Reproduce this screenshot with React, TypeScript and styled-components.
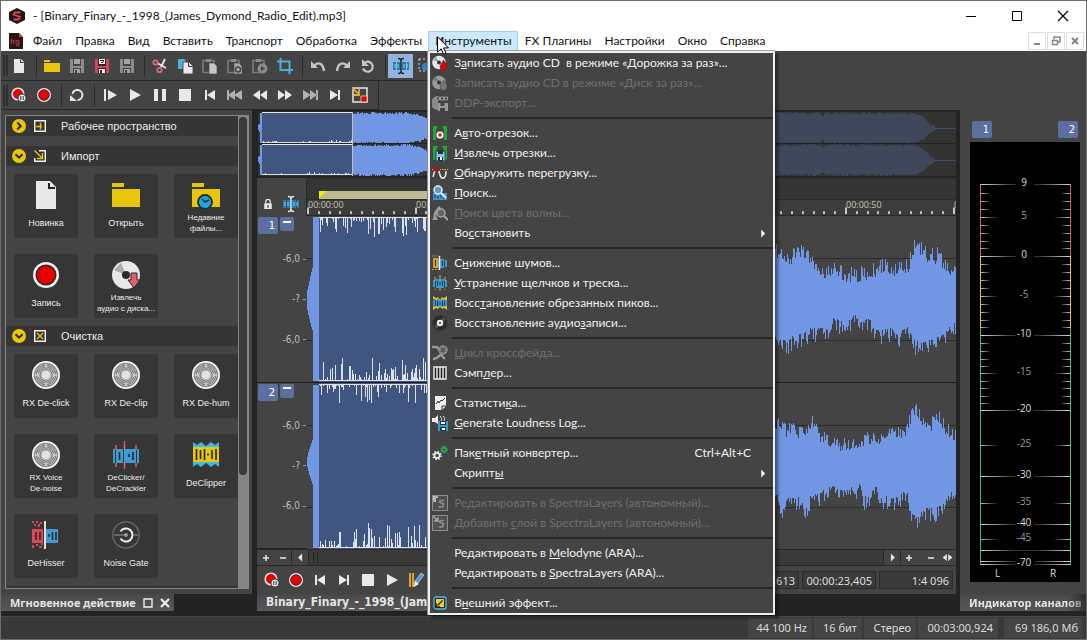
import React from "react";
import styled, { createGlobalStyle, css } from "styled-components";

const UI = '"Noto Sans", "Open Sans", sans-serif';
const MENU = 'Lato, "Open Sans", sans-serif';
const CONDENSED = '"DejaVu Sans Condensed", "DejaVu Sans", sans-serif';
const SMALL = '"Open Sans", "Noto Sans", sans-serif';
const ARIAL = '"Liberation Sans", Arial, sans-serif';

const C = {
  panel: "#444444",
  dark: "#232323",
  row: "#353535",
  tile: "#363636",
  line: "#292929",
  wave: "#7096e4",
  sel: "#405680",
  chip: "#5b6fa0",
  blue: "#3f9bd1",
  yellow: "#e8c60c",
  red: "#e80000",
  light: "#e8e8e8",
  grey: "#8c8c8c",
};

const Global = createGlobalStyle`
  * { box-sizing: border-box; }
  body { margin: 0; background: ${C.dark}; font-family: ${UI}; font-size: 11px; }
  button, input { font: inherit; color: inherit; background: none; border: 0; padding: 0; margin: 0; }
  svg { display: block; flex: none; }
`;

/* ---------- icons ---------- */

type IconProps = { size?: number; box?: number; children: React.ReactNode };
const Icon = ({ size = 16, box = 16, children }: IconProps) => (
  <svg width={size} height={size} viewBox={`0 0 ${box} ${box}`} aria-hidden="true">{children}</svg>
);

const Floppy = ({ body, ink, mark }: { body: string; ink: string; mark?: boolean }) => (
  <Icon>
    <path d="M1 1h14v14H1z" fill={body} />
    <path d="M4 1h8v7H4zM4 10h8v5H4z" fill={ink} />
    <path d="M5 1h6v5H5zM5 11h6v4H5z" fill={mark ? "#f0f0f0" : "#a4a4a4"} />
    <path d="M6 12h2v3H6z" fill={ink} />
    {mark && <path d="M6 2h4v1H6zM9 3h1v1H9zM7 4h2v1H7z" fill={ink} />}
  </Icon>
);
const FileIcon = () => (
  <Icon>
    <path d="M3 1h7l3 3v11H3z" fill={C.light} />
    <path d="M9.500 1.500v3h3" fill="none" stroke="#333" />
  </Icon>
);
const FolderIcon = () => (
  <Icon><path d="M0 2h6v2H0zM0 5h16v9H0z" fill={C.yellow} /></Icon>
);
const CutIcon = () => (
  <Icon>
    <path d="M5 5l9 5M9 9l4-8" stroke={C.light} strokeWidth="1.800" fill="none" />
    <circle cx="3.500" cy="4.500" r="2.200" fill="none" stroke="#e06a78" strokeWidth="1.800" />
    <circle cx="7.500" cy="12" r="2.200" fill="none" stroke="#e06a78" strokeWidth="1.800" />
  </Icon>
);
const CopyIcon = () => (
  <Icon>
    <path d="M1 1h6l2 2v8H1z" fill="#4fb0e0" />
    <path d="M6 4h6l4 4v8H6z" fill={C.light} stroke="#333" strokeWidth=".8" />
    <path d="M11.500 4.500v4h4" fill="none" stroke="#333" />
  </Icon>
);
const PasteIcon = ({ kind }: { kind: "page" | "mix" | "play" }) => (
  <Icon>
    <path d="M1 2.500h11v12H1z" fill="none" stroke="#7a7a7a" strokeWidth="1.600" />
    <path d="M4 1h5v3H4z" fill="#8a8a8a" />
    {kind === "page" && <path d="M7 5h5l3 3v8H7z" fill="#c4c4c4" stroke="#444" strokeWidth=".6" />}
    {kind === "mix" && (
      <>
        <path d="M7 5h5l3 3v8H7z" fill="#a8a8a8" stroke="#444" strokeWidth=".6" />
        <circle cx="11" cy="11.500" r="2.500" fill="none" stroke="#444" strokeWidth="1.400" />
      </>
    )}
    {kind === "play" && (
      <>
        <circle cx="10.500" cy="10.500" r="5" fill="#8a8a8a" />
        <path d="M9 8l4 2.500L9 13z" fill="#444" />
      </>
    )}
  </Icon>
);
const CropIcon = () => (
  <Icon><path d="M3.500 0v12H16M0 3.500h12.500V16" fill="none" stroke="#4fb0e0" strokeWidth="2" /></Icon>
);
const UndoIcon = ({ flip }: { flip?: boolean }) => (
  <Icon>
    <g transform={flip ? "matrix(-1 0 0 1 16 0)" : undefined}>
      <path d="M4 8c3-4 9-4 10 5" fill="none" stroke="#c4c4c4" strokeWidth="2.400" />
      <path d="M1 3v7h7z" fill="#c4c4c4" />
    </g>
  </Icon>
);
const RedoAllIcon = () => (
  <Icon>
    <path d="M5 4.500a5 5 0 1 1-2 6" fill="none" stroke="#c4c4c4" strokeWidth="2.200" />
    <path d="M2 1v7h7z" fill="#c4c4c4" />
  </Icon>
);
const EditToolIcon = ({ beam = "#222" }: { beam?: string }) => (
  <Icon size={18} box={18}>
    <path d="M1 5h3v8H1zM5 5h4v8H5zM10 5h4v8h-4zM15 5h2v8h-2z" fill="#1f7db8" />
    <path d="M6 7v4M12 7v4M3 7v4M15 7v4" stroke="#bfe0f4" strokeWidth=".8" />
    <path d="M6 1.500c2 0 3 .5 3 2v11c0 1.500-1 2-3 2M12 1.500c-2 0-3 .5-3 2v11c0 1.500 1 2 3 2" fill="none" stroke={beam} strokeWidth="1.400" />
  </Icon>
);
const ZoomToolIcon = () => (
  <Icon>
    <path d="M1 1h13v12H1z" fill="none" stroke="#ddd" strokeDasharray="2 2" />
    <circle cx="8" cy="9" r="4" fill="#2a86c0" />
  </Icon>
);
const RecIcon = () => (
  <Icon size={14}>
    <circle cx="8" cy="8" r="7.200" fill={C.red} stroke={C.light} strokeWidth="1.600" />
    <circle cx="8" cy="8" r="5.900" fill="none" stroke="#333" strokeWidth="1" />
  </Icon>
);
const RecPauseIcon = () => (
  <Icon>
    <circle cx="7" cy="7" r="5.800" fill={C.red} stroke={C.light} strokeWidth="1.600" />
    <circle cx="11" cy="11" r="4.500" fill="#333" />
    <circle cx="11" cy="11" r="3.500" fill={C.light} />
    <path d="M9.800 9v4M12.200 9v4" stroke="#333" />
  </Icon>
);
const LoopIcon = () => (
  <Icon>
    <path d="M3.500 7A5 5 0 1 1 8.500 13" fill="none" stroke={C.light} strokeWidth="2" />
    <path d="M1 14V8l7 6z" fill={C.light} />
  </Icon>
);
const Shape = ({ d, fill = C.light, size = 16 }: { d: string; fill?: string; size?: number }) => (
  <Icon size={size}><path d={d} fill={fill} /></Icon>
);
const P = {
  playAll: "M2 2h2v12H2zM6 3l9 5-9 5z",
  play: "M3 2l11 6-11 6z",
  pause: "M2 2h4v12H2zM10 2h4v12h-4z",
  stop: "M2 2h12v12H2z",
  start: "M3 3h2v10H3zM5 8l8-5v10z",
  end: "M11 3h2v10h-2zM11 8L3 3v10z",
  prev: "M0 3h2v10H0zM1 8l7-5v10zM7 8l8-5v10z",
  next: "M14 3h2v10h-2zM15 8L8 3v10zM9 8L1 3v10z",
  rewBoth: "M1 8l7-5v10zM8 8l7-5v10z",
  fwdBoth: "M15 8L8 3v10zM8 8L1 3v10z",
  right: "M6 3l5 5-5 5z",
  left: "M10 3L5 8l5 5z",
  plus: "M7 4h2v3h3v2H9v3H7V9H4V7h3z",
  minus: "M4 7h8v2H4z",
  both: "M7 3L1 8l6 5zM9 3l6 5-6 5z",
};
const ExtIcon = () => (
  <Icon>
    <path d="M1 1h14v14H1z" fill="none" stroke={C.light} strokeWidth="1.500" />
    <path d="M0 1l7 6M7 2v6H2" stroke="#e0b030" strokeWidth="1.800" fill="none" />
    <path d="M9 9h6v6H9z" fill={C.red} stroke="#eda" strokeWidth=".8" />
  </Icon>
);
const PencilIcon = () => (
  <Icon>
    <path d="M1 1h2v14H1zM4 1h2v14H4z" fill="#e0a020" />
    <path d="M6 14l1-5 6-8 3 2-6 8z" fill="#4aa3d8" stroke="#ddd" strokeWidth=".6" />
    <path d="M6 15l1-6 4 3z" fill="#f0f0f0" />
  </Icon>
);
const LockIcon = () => (
  <Icon size={10}>
    <path d="M2 7h12v9H2z" fill={C.light} />
    <path d="M4.500 8V4a3.500 3.500 0 0 1 7 0v4" fill="none" stroke={C.light} strokeWidth="2" />
    <path d="M7 10h2v4H7z" fill="#333" />
  </Icon>
);

const DiscIcon = ({ drop, dim }: { drop: string; dim?: boolean }) => (
  <Icon>
    <circle cx="7" cy="7.500" r="6.800" fill={dim ? "#9a9a9a" : C.light} />
    <path d="M7 7.500L1 5l3-3.500z" fill={dim ? "#777" : "#aaa"} />
    <circle cx="7" cy="7.500" r="2" fill="#333" />
    <path d="M11.500 5c2 3 3.500 4 3.500 7a3.500 3.500 0 0 1-7 0c0-3 2-3 3.500-7z" fill={drop} stroke="#444" strokeWidth=".6" />
  </Icon>
);
const DdpIcon = () => (
  <Icon>
    <path d="M6 1A7 7 0 1 0 6 15z" fill="#8a8a8a" />
    <path d="M4.500 2h3v3h-3zM8.500 2h3v3h-3zM12.500 2h3v3h-3z" fill="#444" stroke="#999" />
    <path d="M6 8h10v8H6z" fill="#999" />
    <path d="M8.500 8h4v3h-4zM8 13h5v3H8z" fill="#444" />
  </Icon>
);
const RegionIcon = ({ save }: { save?: boolean }) => (
  <Icon>
    <path d="M1 1h5l-2 4v10H1zM15 1h-5l2 4v10h3z" fill="#1fa832" />
    {save ? (
      <>
        <path d="M4 6h9v10H4z" fill="#8cc4ea" stroke="#1a3040" strokeWidth=".8" />
        <path d="M6 6h5v3H6zM6 12h5v4H6z" fill="#1a3040" />
        <path d="M8 12h2v3H8z" fill="#fff" />
      </>
    ) : (
      <>
        <circle cx="8" cy="10" r="4" fill="#f0f0f0" stroke="#333" strokeWidth=".6" />
        <circle cx="8" cy="10" r="1.700" fill="#c81818" />
      </>
    )}
  </Icon>
);
const ClipIcon = () => (
  <Icon>
    <path d="M0 4.500h16" stroke="#e0c020" strokeDasharray="1.500 1" />
    <path d="M1 12C2 10 2 4 5 4s2 8 5 9 4-3 4-7" fill="none" stroke="#eee" strokeWidth="1.500" />
    <path d="M1 5c1-4 6-4 7 0-1 2-6 2-7 0z" fill="#a01818" />
  </Icon>
);
const FindIcon = ({ dim }: { dim?: boolean }) => (
  <Icon>
    {dim ? <path d="M0 15c2-1 1-6 3-9l4-5 2 2-5 7 2 5z" fill="#9a9a9a" /> : <path d="M1 8h14v7H1z" fill="#3b98d4" />}
    {!dim && <path d="M3 10v3M6 11v3M9 10v3M12 11v3" stroke="#15384f" />}
    <circle cx={dim ? 9 : 6} cy={dim ? 8 : 5} r="4" fill={dim ? "#666" : "#5f9cc0"} stroke={dim ? "#a5a5a5" : "#eee"} strokeWidth="1.500" />
    <path d={dim ? "M12 11l4 4" : "M9 8l5 5"} stroke={dim ? "#a5a5a5" : "#eee"} strokeWidth="2" />
  </Icon>
);
const RepairIcon = ({ kind }: { kind: "noise" | "click" | "clip" }) => (
  <Icon>
    <path d="M1 5h2v7H1zM4 4h8v9H4zM13 5h2v7h-2z" fill="#3b98d4" />
    {kind === "noise" && (
      <>
        <path d="M1 3h5v10H1z" fill="#d8a020" />
        <path d="M0 1h7M0 14.500h7" stroke="#e0b020" strokeDasharray="1.500 1.500" />
        <path d="M3.500 5v6" stroke="#3a2c08" />
        <path d="M7.500 1v14" stroke="#f2f2f2" strokeWidth="1.500" />
        <path d="M10.500 6v5" stroke="#15384f" />
      </>
    )}
    {kind === "click" && <path d="M3 2v13M8 0v16M13 2v13" stroke="#e0b020" strokeDasharray="4 8 4" />}
    {kind === "clip" && <path d="M1 1l3 2 2-1 2 3 2-3 2 1 3-2v4h-3l-2-1-2 1-2-1-2 1-3-1zM1 15l3-2 2 1 2-3 2 3 2-1 3 2v-4h-3l-2 1-2-1-2 1-2-1-3 1z" fill="#e0c020" />}
    {kind !== "noise" && <path d="M5.500 6v5M8 7v3M10.500 6v5" stroke="#15384f" />}
  </Icon>
);
const VinylIcon = () => (
  <Icon>
    <circle cx="8" cy="8" r="7.500" fill="#2c2c2c" />
    <path d="M8 8L14 5l-3-3zM8 8l-6 3 3 3z" fill="#555" />
    <circle cx="8" cy="8" r="3.200" fill="#f2f2f2" />
    <circle cx="8" cy="8" r="1" fill="#222" />
  </Icon>
);
const CrossfadeIcon = () => (
  <Icon>
    <path d="M0 2h5l3 4M1 14c5 0 6-3 9-6M8 9l5 5" stroke="#999" strokeWidth="2.400" fill="none" />
    <circle cx="11" cy="5" r="4.200" fill="#777" stroke="#999" />
    <path d="M9 4h4M9 6h4" stroke="#444" />
  </Icon>
);
const PianoIcon = () => (
  <Icon>
    <path d="M2 2h12v12H2z" fill="#222" stroke="#eee" strokeWidth="1.400" />
    <path d="M5 2v12M8 2v12M11 2v12" stroke="#eee" strokeWidth="1.400" />
  </Icon>
);
const StatsIcon = () => (
  <Icon>
    <path d="M3 1h11v10l-4 4H3z" fill="#eee" />
    <path d="M4 9l2-3 1 2 2-3 1 1 3-3" stroke="#333" fill="none" />
    <path d="M10 15v-4h4" stroke="#333" fill="none" />
  </Icon>
);
const LoudIcon = () => (
  <Icon>
    <path d="M0 3h3l3-3v9L3 7H0z" fill="#eee" />
    <path d="M8 1c2 2 2 3 1 5M11 1c2 2 2 3 1 5" stroke="#ddd" fill="none" />
    <path d="M6 6h10v10H6z" fill="#3b98d4" />
    <path d="M8 6h6v4H8zM8 12h6v4H8z" fill="#15384f" />
    <path d="M9 7h4v2H9zM10 13h3v2h-3z" fill="#fff" />
  </Icon>
);
const GearsIcon = () => (
  <Icon>
    <circle cx="5" cy="10.500" r="2.600" fill="none" stroke="#eee" strokeWidth="1.600" />
    <circle cx="5" cy="10.500" r="4" fill="none" stroke="#eee" strokeWidth="1.400" strokeDasharray="1.570 1.570" />
    <circle cx="12" cy="4.500" r="1.900" fill="none" stroke="#23b04a" strokeWidth="1.600" />
    <circle cx="12" cy="4.500" r="3.200" fill="none" stroke="#23b04a" strokeWidth="1.400" strokeDasharray="1.250 1.260" />
  </Icon>
);
const SpectraIcon = ({ add }: { add?: boolean }) => (
  <Icon>
    <path d="M.5.500h15v15H.5z" fill="#505050" stroke="#8e8e8e" />
    <path d="M12 5.500H8.500l-1 1.500 4 2-1 3H6.500" fill="none" stroke="#8e8e8e" strokeWidth="1.600" />
    {add ? <path d="M1 1l5 5M6 2v4H2" stroke="#aaa" strokeWidth="1.400" fill="none" /> : <path d="M1 1h5v2H4v4H1z" fill="#b5b5b5" />}
  </Icon>
);
const ExternalFxIcon = () => (
  <Icon>
    <rect x="2" y="2" width="12" height="12" rx="2" fill="#15384f" stroke="#5ab0e4" strokeWidth="1.300" />
    <path d="M4 4h8v8H4z" fill="#f4ce18" />
    <path d="M5.500 10.500l5-5M4 8v4h4" stroke="#222" strokeWidth="1.400" fill="none" />
  </Icon>
);

/* ---------- large tile pictures (28 px) ---------- */

const Big = ({ children }: { children: React.ReactNode }) => <Icon size={28} box={28}>{children}</Icon>;
const BigFile = () => (
  <Big><path d="M4 0h14l6 6v22H4z" fill={C.light} /><path d="M17 2v5h6" fill="none" stroke="#222" strokeWidth="2" /></Big>
);
const BigFolder = ({ clock }: { clock?: boolean }) => (
  <Big>
    <path d="M0 2h12v4H0zM0 8h28v18H0z" fill={C.yellow} />
    {clock && (
      <>
        <circle cx="13" cy="21" r="7" fill="#16a8e0" stroke="#2a2a2a" strokeWidth="1.800" />
        <path d="M10 18l3 3 4-2" fill="none" stroke="#1c2a33" strokeWidth="1.600" />
      </>
    )}
  </Big>
);
const BigRec = () => (
  <Big>
    <circle cx="14" cy="14" r="13" fill="#f0f0f0" />
    <circle cx="14" cy="14" r="10.500" fill="#2a2a2a" />
    <circle cx="14" cy="14" r="9" fill={C.red} />
  </Big>
);
const BigDisc = () => (
  <Big>
    <circle cx="14" cy="14" r="14" fill={C.light} />
    <path d="M14 14L2 9l7-7z" fill="#aaa" />
    <circle cx="14" cy="14" r="4" fill="#2a2a2a" />
    <path d="M19 12h6v7h3l-6 8-6-8h3z" fill="#e0606c" stroke="#2a2a2a" />
  </Big>
);
const BigRx = () => (
  <Big>
    <circle cx="14" cy="14" r="13.200" fill="#bdbdbd" stroke="#f6f6f6" strokeWidth="1.600" />
    {[11.5, 9.7, 7.9, 6.1].map((r) => <circle key={r} cx="14" cy="14" r={r} fill="none" stroke="#5c5c5c" strokeWidth=".8" />)}
    <path d="M1.500 14l6-2.500v5zM26.500 14l-6-2.500v5zM14 1.500l-2 5h4zM14 26.500l-2-5h4z" fill="#cfcfcf" fillOpacity=".8" />
    <circle cx="14" cy="14" r="4" fill="#e2e2e2" />
  </Big>
);
const BigClicker = () => (
  <Big>
    <path d="M1 8h2v14H1zM4 8h7v14H4zM12 8h12v14H12zM25 8h2v14h-2z" fill={C.blue} />
    <path d="M4 4v22M24 4v22" stroke="#d0606c" strokeWidth="1.600" strokeDasharray="5 13 5" />
    <path d="M12.500 0v28" stroke="#d0606c" strokeWidth="1.600" strokeDasharray="8 13 8" />
    <path d="M7.500 11v8M17 13v3M21 11v8" stroke="#15293a" strokeWidth="1.600" />
  </Big>
);
const BigClipper = () => (
  <Big>
    <path d="M1 1l4 3 4-3 5 4 5-4 4 3 4-3v25l-4-3-4 3-5-4-5 4-4-3-4 3z" fill="#3fb8e8" />
    <path d="M1 6h26v15H1z" fill={C.yellow} />
    <path d="M4.500 8v11M8.500 9v9M12.500 8v11M16 12.500v2M20 9v9M24 8v11" stroke="#222" strokeWidth="1.600" />
  </Big>
);
const BigHisser = () => (
  <Big>
    <path d="M0 8h11v14H0zM0 0h2v2H0zM4 0h2v2H4zM8 1h2v2H8zM2 3h2v2H2zM6 3h2v3H6zM0 24h2v3H0zM4 23h2v2H4zM7 25h3v2H7zM9 22h2v2H9z" fill="#d84856" />
    <path d="M14 8h12v14H14z" fill={C.blue} />
    <path d="M13 0v28" stroke="#f2f2f2" strokeWidth="1.800" />
    <path d="M4 11v8M8 11v8M17 13v3M20.500 11v8M24 11v8" stroke="#2a2030" strokeWidth="1.500" fill="none" />
  </Big>
);
const BigGate = () => (
  <Big>
    <circle cx="14" cy="14" r="13.200" fill="none" stroke="#6c6c6c" strokeWidth="1.300" />
    <path d="M8.500 10.500A6.500 6.500 0 1 1 8.500 17.500" fill="none" stroke="#eee" strokeWidth="2" />
    <path d="M2 14h11M21 14h5" stroke="#777" strokeWidth="1.600" />
    <circle cx="14" cy="14" r="2" fill="#999" />
  </Big>
);

/* ---------- shell ---------- */

const Window = styled.div`
  height: 100vh; min-height: 560px; display: flex; flex-direction: column;
  border: 1px solid #6c6c6c; background: ${C.dark}; color: #ececec; overflow: hidden;
`;
const TitleBar = styled.header`
  height: 30px; flex: none; display: flex; align-items: center; background: #fff; color: #111; padding-left: 7px;
`;
const Title = styled.h1`
  flex: 1; margin: 0 0 0 7px; font: 400 12px/20px ${MENU};
`;
const CaptionButton = styled.button`
  width: 46px; height: 29px; display: grid; place-items: center;
`;
const MenuBar = styled.nav`
  height: 20px; flex: none; display: flex; background: #fff; color: #111; padding-left: 7px; position: relative; z-index: 5;
  font: 12px/20px ${MENU};
`;
const MenuTop = styled.div<{ $open?: boolean }>`
  position: relative; height: 20px;
  > button {
    height: 20px; padding: 0 5px 0 6px; line-height: 18px; border: 1px solid transparent; white-space: nowrap;
    ${(p) => p.$open && css`background: #cce8ff; border-color: #99d1f5;`}
  }
`;
const DocIcon = styled.span`width: 18px; display: grid; align-items: center;`;
const MdiGroup = styled.div`margin-left: auto; display: flex; gap: 1px; padding: 1px 2px 0 0;`;
const MdiButton = styled.button`
  width: 18px; height: 18px; border: 1px solid #dedede; display: grid; place-items: center;
`;
const Pointer = styled.div`position: absolute; left: 9px; top: 5px; z-index: 3; pointer-events: none;`;

/* ---------- drop-down ---------- */

const Popup = styled.div`
  position: absolute; left: 0; top: 20px; width: 347px; background: ${C.panel}; color: #f0f0f0;
  border: 2px solid #f0f0f0; box-shadow: -1px 0 0 #8a8a8a, 0 -1px 0 #a0a0a0, 3px 3px 3px rgba(0,0,0,.45);
`;
const PopupItem = styled.button`
  width: 100%; height: 20px; display: flex; align-items: center; padding: 0 5px 0 2px; text-align: left; line-height: 20px;
  white-space: pre;
  &:disabled { color: #707070; }
`;
const PopupIcon = styled.span`width: 22px; flex: none;`;
const PopupText = styled.span`flex: 1;`;
const Shortcut = styled.span`padding-right: 17px;`;
const Rule = styled.hr`
  height: 2px; margin: 4px 0 4px 22px; border: 0; background: #272727;
`;

/* ---------- toolbars ---------- */

const ToolArea = styled.div`flex: none; background: ${C.panel};`;
const ToolRow = styled.div<{ $short?: boolean }>`
  display: flex; align-items: center; height: ${(p) => (p.$short ? 29 : 30)}px;
  border-bottom: 1px solid ${C.line};
  ${(p) => p.$short ? css`width: 378px; border-right: 1px solid ${C.line};` : css`width: 70%;`}
`;
const Grip = styled.span`
  width: 5px; height: 21px; margin: 0 -2px 0 2px; border: solid #303030; border-width: 0 2px;
`;
const ToolButton = styled.button<{ $on?: boolean }>`
  width: 25px; height: 24px; display: grid; place-items: center;
  ${(p) => p.$on && css`background: #94b4dc;`}
`;
const ToolGap = styled.span`
  width: 8px; height: 22px; display: block; border-right: 1px solid #2c2c2c; margin: 0 2px 0 -2px;
`;

/* ---------- body ---------- */

const Body = styled.main`
  flex: 1; min-height: 0; display: grid; grid-template-columns: 251px minmax(0, 1fr) 126px; padding-bottom: 5px;
`;
const Column = styled.section`display: flex; flex-direction: column; min-height: 0; min-width: 0;`;
const DockTab = styled.div<{ $wide?: boolean }>`
  align-self: flex-start; height: 17px; flex: none; display: flex; align-items: center; gap: 7px; padding: 0 4px 0 9px;
  background: linear-gradient(#484848, #585858); color: #e4e4e4; font: bold 11px/17px ${UI}; white-space: nowrap; overflow: hidden;
  ${(p) => p.$wide && css`align-self: stretch; padding-right: 0; mask-image: linear-gradient(90deg, #000 85%, rgba(0,0,0,.3));`}
`;

/* left dock */
const Dock = styled.div`flex: 1; min-height: 0; background: ${C.panel}; padding: 5px 3px 5px 4px; display: flex;`;
const Frame = styled.div`
  flex: 1; min-width: 0; border: 1px solid #868686; display: flex; overflow: hidden;
`;
const Scroller = styled.div`flex: 1; min-width: 0; overflow: hidden;`;
const Track = styled.div`width: 10px; background: #838383; flex: none; padding: 1px 1px 0;`;
const Thumb = styled.div`height: 76%; background: #3a3a3a; border-radius: 5px;`;
const Section = styled.button`
  width: 100%; height: 20px; margin-bottom: 10px; padding-left: 6px; background: ${C.row}; display: flex; align-items: center;
  font: 11px/20px ${ARIAL}; text-align: left;
`;
const SectionLabel = styled.span`margin-left: 15px;`;
const SectionGlyph = styled.span`margin-left: 8px;`;
const Tiles = styled.div`
  display: grid; grid-template-columns: repeat(3, 64px); gap: 16px; padding: 0 0 8px 8px; margin-top: -2px;
`;
const Tile = styled.button<{ $small?: boolean }>`
  height: 64px; background: ${C.tile}; display: flex; flex-direction: column; align-items: center; padding-top: 7px;
  font: 9px/12px ${ARIAL};
  gap: 8px;
  ${(p) => p.$small && css`font-size: 8px; line-height: 11px; gap: 3px;`}
  span { white-space: pre; }
`;

/* data window */
const DataWindow = styled.div`
  flex: 1; min-height: 0; margin: 0 4px 0 5px; display: flex; flex-direction: column; background: ${C.panel};
`;
const Overview = styled.div`
  flex: none; height: 68px; padding: 2px 0 2px 1px; background: ${C.dark};
  svg { width: 100%; }
`;
const RulerRow = styled.div`flex: none; height: 38px; display: flex;`;
const RulerHead = styled.div`
  width: 50px; flex: none; border-right: 1px solid ${C.line}; display: flex; align-items: center; justify-content: space-between;
  padding: 13px 6px 0 6px;
`;
const Ruler = styled.div`flex: 1; min-width: 0; display: flex; flex-direction: column; background: #3c3c3c;`;
const RegionTrack = styled.div`
  height: 22px; background: #353535; border-bottom: 1px solid #2b2b2b; padding: 13px 0 0 12px;
`;
const RegionBar = styled.div`
  width: 40%; height: 8px; background: linear-gradient(135deg, #f4ea00 5px, #bfbb92 5px);
`;
const TimeTrack = styled.svg`width: 100%; height: 16px; border-bottom: 1px solid ${C.line};`;
const Lanes = styled.div`flex: 1; min-height: 0; display: flex;`;
const LaneHeads = styled.div`width: 50px; flex: none; display: grid; grid-template-rows: 1fr 1fr;`;
const LaneHead = styled.div`display: grid; border-bottom: 1px solid #222; > * { grid-area: 1 / 1; }`;
const LaneButtons = styled.div`display: flex; gap: 2px; padding: 1px; align-items: flex-start;`;
const Chip = styled.button`
  width: 20px; height: 17px; border-radius: 2px; background: ${C.chip}; color: #fff; font: 11px/17px ${CONDENSED};
  text-align: right; padding-right: 3px;
`;
const FoldButton = styled.button`
  width: 14px; height: 14px; border-radius: 2px; background: ${C.chip}; padding: 0 3px 5px;
  &::before { content: ""; display: block; height: 2px; background: #fff; }
`;
const DbScale = styled.div`
  display: flex; flex-direction: column; justify-content: space-between; align-items: flex-end; padding: 37px 0 36px;
  font: 10px/12px ${CONDENSED}; color: #c0beb4;
  span { display: flex; align-items: center; }
  span::after { content: ""; width: 3px; height: 1px; background: #999; margin: 0 1px 0 3px; }
`;
const WaveBox = styled.div`flex: 1; min-width: 0; svg { width: 100%; height: 100%; }`;
const ScrollRow = styled.div`
  flex: none; height: 17px; display: flex; align-items: stretch; border-top: 1px solid ${C.line}; border-bottom: 1px solid ${C.line};
`;
const ScrollButton = styled.button<{ $line?: boolean; $apart?: boolean }>`
  width: 17px; display: grid; place-items: center;
  ${(p) => p.$line && css`border-left: 1px solid ${C.line};`}
  ${(p) => p.$apart && css`margin-left: 5px;`}
`;
const ScrollTrack = styled.div`
  flex: 1; background: #3a3a3a; border-left: 1px solid ${C.line}; padding: 2px 4px;
  &::before { content: ""; display: block; width: 3px; height: 11px; border: solid #262626; border-width: 0 1px; }
`;
const PlayRow = styled.div`flex: none; height: 28px; display: flex; align-items: center; padding: 0 3px 0 3px;`;
const PlayButton = styled.button`width: 24px; height: 24px; display: grid; place-items: center;`;
const Fields = styled.div`margin-left: auto; display: flex; gap: 3px;`;
const Field = styled.input`
  width: 74px; height: 18px; border: 1px solid #2a2a2a; background: #3a3a3a; color: #dcdcdc; text-align: right;
  padding-right: 3px; font: 11px/16px ${UI};
`;

/* meter */
const MeterPanel = styled.div`
  flex: 1; min-height: 0; background: ${C.panel}; padding: 11px 6px 12px 10px; display: flex; flex-direction: column; gap: 4px;
`;
const MeterHeads = styled.div`display: flex; justify-content: space-between; padding: 0 2px;`;
const MeterBox = styled.div`flex: 1; min-height: 0; background: #000; svg { width: 100%; height: 100%; }`;

/* status */
const Status = styled.footer`
  flex: none; height: 23px; background: #393939; border-top: 1px solid #484848; display: flex; justify-content: flex-end; gap: 2px;
  padding: 1px 3px 1px 0;
`;
const StatusCell = styled.div<{ $w: number; $gap?: boolean }>`
  width: ${(p) => p.$w}px; background: ${C.panel}; text-align: right; padding-right: 5px; line-height: 20px; color: #dcdcdc;
  white-space: nowrap;
  ${(p) => p.$gap && css`margin-left: 4px;`}
`;

/* ---------- wave data ---------- */

const rng = (seed: number) => () => {
  seed = (seed * 1664525 + 1013904223) % 4294967296;
  return seed / 4294967296;
};
type Pt = [number, number];
const at = (pts: Pt[], x: number) => {
  for (let i = 1; i < pts.length; i++) {
    if (x <= pts[i][0]) {
      const [x0, y0] = pts[i - 1];
      const [x1, y1] = pts[i];
      return y0 + ((y1 - y0) * (x - x0)) / (x1 - x0);
    }
  }
  return pts[pts.length - 1][1];
};
const lane = (top: Pt[], bottom: Pt[], from: number, to: number, jitter: number, seed: number) => {
  const r = rng(seed);
  let d = "";
  for (let x = from; x < to; x++) {
    const a = at(top, x) + (0.4 - Math.pow(r(), 1.6)) * jitter;
    const b = at(bottom, x) + (Math.pow(r(), 1.6) - 0.4) * jitter;
    d += `M${x} ${a.toFixed(1)}h1V${b.toFixed(1)}h-1z`;
  }
  return d;
};
const spikes = (from: number, to: number, base: number, dir: 1 | -1, max: number, power: number, seed: number) => {
  const r = rng(seed);
  let d = "";
  for (let x = from; x < to; x++) {
    const v = r();
    const h = v > 0.4 ? 1 + Math.pow(r(), power) * max : 1;
    d += `M${x} ${base}h1v${(dir * h).toFixed(1)}h-1z`;
  }
  return d;
};

const top1: Pt[] = [[264, 46], [470, 36], [473, 34], [483, 44], [488, 38], [492, 34], [500, 42], [511, 53], [518, 56], [528, 53], [538, 60], [550, 60], [563, 57], [578, 50], [588, 54], [593, 46], [600, 53], [604, 42], [607, 28], [616, 36], [622, 44], [624, 34], [628, 42], [632, 34], [635, 49], [642, 54], [649, 49]];
const bot1: Pt[] = [[264, 120], [470, 126], [480, 131], [488, 123], [495, 124], [503, 118], [518, 116], [526, 108], [540, 112], [548, 104], [563, 110], [573, 121], [583, 117], [593, 126], [598, 110], [607, 130], [613, 132], [623, 130], [633, 124], [649, 111]];
const top2: Pt[] = [[264, 216], [470, 212], [473, 206], [480, 216], [486, 208], [493, 219], [506, 205], [513, 220], [523, 225], [536, 230], [548, 226], [563, 223], [573, 222], [581, 213], [586, 212], [593, 221], [600, 212], [605, 198], [608, 193], [618, 208], [624, 210], [628, 198], [638, 214], [649, 219]];
const bot2: Pt[] = [[264, 280], [470, 285], [475, 301], [480, 288], [493, 286], [498, 300], [503, 286], [515, 280], [526, 275], [540, 279], [553, 273], [557, 286], [568, 276], [578, 288], [583, 280], [588, 286], [600, 280], [606, 304], [611, 306], [616, 297], [628, 298], [640, 284], [649, 278]];

const WAVE1 = lane(top1, bot1, 264, 649, 15, 7);
const WAVE2 = lane(top2, bot2, 264, 649, 15, 21);

const Waves = () => (
  <svg viewBox="0 0 649 333" preserveAspectRatio="none" shapeRendering="crispEdges" role="img" aria-label="Waveform">
    <path d="M0 42h649M0 124h649M0 209h649M0 291h649" stroke="#2c2c2c" />
    <path d={WAVE1 + WAVE2} fill={C.wave} />
    <path d="M12 1h252v332H12z" fill={C.sel} />
    <path d="M0 76l2-8 2-10 2-8V1h6v164H6v-50l-2-6-2-8-2-10zM0 243l2-9 2-5 2-6v-54h6v163H6v-63l-2-6-2-6-2-8z" fill={C.wave} />
    <path
      d={spikes(12, 264, 1, 1, 19, 2.2, 3) + spikes(12, 264, 165, -1, 23, 1.6, 11) + spikes(12, 264, 168, 1, 19, 2, 5) + spikes(12, 264, 332, -1, 25, 1.8, 17)}
      fill="#dce0e8"
    />
    <path d="M0 166.500h649" stroke="#1e1e1e" />
  </svg>
);

const ovTop = (y: number): Pt[] => [[90, y], [150, y], [162, y + 2], [170, y + 6], [190, y + 1], [520, y], [562, y], [564, y + 3], [567, y], [655, y], [664, y + 3], [670, y + 10], [678, y + 15], [698, y + 16]];
const ovBot = (y: number): Pt[] => [[90, y], [150, y], [162, y - 2], [170, y - 6], [190, y - 1], [520, y], [562, y], [564, y - 3], [567, y], [655, y], [664, y - 3], [670, y - 9], [678, y - 15], [698, y - 15]];
const OverviewWaves = () => (
  <svg viewBox="0 0 698 64" height="64" preserveAspectRatio="none" shapeRendering="crispEdges" role="img" aria-label="Overview">
    <path d="M0 0h698v64H0z" fill="#333" />
    <path d={lane(ovTop(1), ovBot(31), 94, 510, 2, 31) + lane(ovTop(33), ovBot(63), 94, 510, 2, 37)} fill={C.wave} />
    <path d={lane(ovTop(1), ovBot(31), 510, 677, 2, 41) + lane(ovTop(33), ovBot(63), 510, 677, 2, 43)} fill="#3f475a" />
    <path d="M677 16.500h21M677 48.500h21" stroke="#3f4f74" />
    <path d="M0 15l1-3h1V1h2v30H2V20H1zM0 47l1-3h1V33h2v30H2V52H1z" fill={C.wave} />
    <path d="M4 1h90v30H4zM4 33h90v30H4z" fill={C.sel} />
    <path d={spikes(4, 94, 31, -1, 2, 3, 51) + spikes(4, 94, 63, -1, 2, 3, 53)} fill="#d8dce4" />
    <path d="M4 .5h90M4 32.500h90" stroke="#e8e8e8" />
    <path d="M0 31.500h698" stroke="#222" />
    <path d="M94.500 0v64" stroke="#c8c4b0" />
  </svg>
);

const Times = () => {
  const marks = [];
  for (let i = 0; i <= 60; i++) {
    const x = Math.round(i * 10.76);
    marks.push(<rect key={i} x={x} y={i % 10 ? 12 : 8} width="2" height={i % 10 ? 3 : 7} fill="#c4c4c0" />);
  }
  return (
    <TimeTrack viewBox="0 0 649 16" preserveAspectRatio="none">
      {marks}
      {[0, 1, 2, 3, 4, 5, 6].map((n) => (
        <text key={n} x={1 + Math.round(n * 107.6)} y="9" fontSize="9" fill="#c8c4b4" fontFamily={SMALL}>{n === 6 ? "00:01:00" : `00:00:${n}0`}</text>
      ))}
    </TimeTrack>
  );
};

/* label, line position, bright label */
const METER: [string, number, boolean][] = [
  ["9", 42, true], ["5", 75, false], ["0", 114, true], ["-5", 154, false], ["-10", 193, true], ["-15", 231, false],
  ["-20", 268, true], ["-25", 303, false], ["-30", 334, true], ["-35", 361, false], ["-40", 382, true], ["-45", 397, false],
  ["-70", 422, true],
];
const MINOR = [51, 59, 67, 83, 91, 99, 106, 122, 130, 138, 146, 162, 170, 178, 185, 201, 209, 217, 224, 239, 246, 254, 261];
const Meter = () => (
  <svg viewBox="0 0 110 440" preserveAspectRatio="none" role="img" aria-label="Meter">
    <defs>
      <linearGradient id="tick" gradientUnits="userSpaceOnUse" x1="10" x2="101">
        <stop offset="0" stopColor="#ddd" /><stop offset=".36" stopColor="#333" /><stop offset=".64" stopColor="#333" /><stop offset="1" stopColor="#ddd" />
      </linearGradient>
      <linearGradient id="tickMid" gradientUnits="userSpaceOnUse" x1="10" x2="101">
        <stop offset="0" stopColor="#ccc" /><stop offset=".2" stopColor="#000" /><stop offset=".8" stopColor="#000" /><stop offset="1" stopColor="#ccc" />
      </linearGradient>
      <linearGradient id="tickMin" gradientUnits="userSpaceOnUse" x1="10" x2="101">
        <stop offset="0" stopColor="#ccc" /><stop offset=".1" stopColor="#333" /><stop offset=".9" stopColor="#333" /><stop offset="1" stopColor="#ccc" />
      </linearGradient>
    </defs>
    {METER.map(([t, y, b]) => (
      <rect key={t} x="10" y={y} width="91" height="1" fill={b ? "url(#tick)" : "url(#tickMid)"} />
    ))}
    {METER.map(([t, y]) => <rect key={t} x={46} y={y - 8} width="18" height="12" fill="#000" />)}
    {MINOR.map((y) => (
      <g key={y} fill="url(#tickMin)"><rect x="10" y={y} width="9" height="1" /><rect x="92" y={y} width="9" height="1" /></g>
    ))}
    <rect x="10" y="408" width="91" height="1" fill="url(#tick)" />
    <rect x="10" y="419" width="36" height="1" fill="url(#tick)" />
    <rect x="65" y="419" width="36" height="1" fill="url(#tick)" />
    {METER.map(([t, y, b]) => (
      <text key={t} x="54" y={y + 2} textAnchor="middle" fontSize="10" fontFamily={SMALL} fill={b ? "#dcdcdc" : "#9a9a9a"}>{t}</text>
    ))}
    <path d="M10.500 42v72M100.500 42v72" stroke="#d85a5a" />
    <path d="M10.500 114v72M100.500 114v72" stroke="#e4c04c" />
    <path d="M10.500 186v237M100.500 186v237" stroke="#57b878" />
    <text x="25" y="435" fontSize="10" fill="#dcdcdc" fontFamily={SMALL}>L</text>
    <text x="80" y="435" fontSize="10" fill="#dcdcdc" fontFamily={SMALL}>R</text>
  </svg>
);

/* ---------- menu data: "&" marks the mnemonic letter ---------- */

type Entry = { t: string; icon?: React.ReactNode; off?: boolean; sub?: boolean; key?: string };
const GROUPS: Entry[][] = [
  [
    { t: "З&аписать аудио CD  в режиме «Дорожка за раз»...", icon: <DiscIcon drop="#e00000" /> },
    { t: "Записать аудио CD в режиме «&Диск за раз»...", icon: <DiscIcon drop="#777" dim />, off: true },
    { t: "DDP-экспорт...", icon: <DdpIcon />, off: true },
  ],
  [
    { t: "А&вто-отрезок...", icon: <RegionIcon /> },
    { t: "&Извлечь отрезки...", icon: <RegionIcon save /> },
    { t: "&Обнаружить перегрузку...", icon: <ClipIcon /> },
    { t: "&Поиск...", icon: <FindIcon /> },
    { t: "&Поиск цвета волны...", icon: <FindIcon dim />, off: true },
    { t: "Во&сстановить", sub: true },
  ],
  [
    { t: "С&нижение шумов...", icon: <RepairIcon kind="noise" /> },
    { t: "&Устранение щелчков и треска...", icon: <RepairIcon kind="click" /> },
    { t: "Восс&тановление обрезанных пиков...", icon: <RepairIcon kind="clip" /> },
    { t: "Восстановление аудио&записи...", icon: <VinylIcon /> },
  ],
  [
    { t: "&Цикл кроссфейда...", icon: <CrossfadeIcon />, off: true },
    { t: "Сэмп&лер...", icon: <PianoIcon /> },
  ],
  [
    { t: "Статисти&ка...", icon: <StatsIcon /> },
    { t: "&Generate Loudness Log...", icon: <LoudIcon /> },
  ],
  [
    { t: "Пак&етный конвертер...", icon: <GearsIcon />, key: "Ctrl+Alt+C" },
    { t: "Скрипт&ы", sub: true },
  ],
  [
    { t: "Редактировать в SpectraLa&yers (автономный)...", icon: <SpectraIcon />, off: true },
    { t: "Добавить &слой в SpectraLayers (автономный)...", icon: <SpectraIcon add />, off: true },
  ],
  [{ t: "Редактировать в &Melodyne (ARA)..." }, { t: "Редактировать в &SpectraLayers (ARA)..." }],
  [{ t: "В&нешний эффект...", icon: <ExternalFxIcon /> }],
];

const Mnemonic = ({ t }: { t: string }) => {
  const i = t.indexOf("&");
  if (i < 0) return <>{t}</>;
  return <>{t.slice(0, i)}<u>{t[i + 1]}</u>{t.slice(i + 2)}</>;
};

const ToolsMenu = () => (
  <Popup role="menu">
    {GROUPS.map((g, i) => (
      <React.Fragment key={i}>
        {i > 0 && <Rule />}
        {g.map((e) => (
          <PopupItem key={e.t} role="menuitem" disabled={e.off}>
            <PopupIcon>{e.icon}</PopupIcon>
            <PopupText><Mnemonic t={e.t} /></PopupText>
            {e.key && <Shortcut>{e.key}</Shortcut>}
            {e.sub && <Shape d="M4 1l7 7-7 7z" size={9} fill="#f4f4f4" />}
          </PopupItem>
        ))}
      </React.Fragment>
    ))}
  </Popup>
);

const MENUS = ["Файл", "Правка", "Вид", "Вставить", "Транспорт", "Обработка", "Эффекты", "Инструменты", "FX Плагины", "Настройки", "Окно", "Справка"];

const TOOLS1: (React.ReactNode | null)[] = [
  <FileIcon />, null, <FolderIcon />, <Floppy body="#8c8c8c" ink="#444" />, <Floppy body="#c84858" ink="#3a2024" mark />, <Floppy body="#8c8c8c" ink="#444" />,
  null, <CutIcon />, <CopyIcon />, <PasteIcon kind="page" />, <PasteIcon kind="mix" />, <PasteIcon kind="play" />, <CropIcon />,
  null, <UndoIcon />, <UndoIcon flip />, <RedoAllIcon />, null, <EditToolIcon />, <ZoomToolIcon />,
];
const TOOLS2: (React.ReactNode | null)[] = [
  <RecPauseIcon />, <RecIcon />, null, <LoopIcon />, null, <Shape d={P.playAll} />, <Shape d={P.play} />, <Shape d={P.pause} />, <Shape d={P.stop} />,
  <Shape d={P.start} />, <Shape d={P.prev} fill="#b0b0b0" />, <Shape d={P.rewBoth} />, <Shape d={P.fwdBoth} />, <Shape d={P.next} fill="#b0b0b0" />,
  <Shape d={P.end} />, <ExtIcon />,
];
const Tools = ({ items, on }: { items: (React.ReactNode | null)[]; on?: number }) => (
  <>{items.map((it, i) => (it ? <ToolButton key={i} $on={i === on}>{it}</ToolButton> : <ToolGap key={i} />))}</>
);

const Round = ({ open }: { open?: boolean }) => (
  <Icon size={14}>
    <circle cx="8" cy="8" r="8" fill={C.yellow} />
    <path d={open ? "M4 6l4 4 4-4" : "M6 4l4 4-4 4"} fill="none" stroke="#2a2a2a" strokeWidth="2.200" />
  </Icon>
);
const Glyph = ({ d, cut }: { d: string; cut?: boolean }) => (
  <Icon size={12} box={12}>
    <path d={cut ? "M5 .7h6.300v10.600H.7V8" : "M.7.700h10.600v10.600H.7z"} fill="none" stroke="#f0f0f0" strokeWidth="1.400" />
    <path d={d} fill="none" stroke={C.yellow} strokeWidth="1.400" />
  </Icon>
);

const IMPORT: [string, React.ReactNode, boolean?][] = [
  ["Новинка", <BigFile />],
  ["Открыть", <BigFolder />],
  ["Недавние\nфайлы...", <BigFolder clock />, true],
  ["Запись", <BigRec />],
  ["Извлечь\nаудио с диска...", <BigDisc />, true],
];
const CLEAN: [string, React.ReactNode, boolean?][] = [
  ["RX De-click", <BigRx />],
  ["RX De-clip", <BigRx />],
  ["RX De-hum", <BigRx />],
  ["RX Voice\nDe-noise", <BigRx />, true],
  ["DeClicker/\nDeCrackler", <BigClicker />, true],
  ["DeClipper", <BigClipper />],
  ["DeHisser", <BigHisser />],
  ["Noise Gate", <BigGate />],
];
const TileGrid = ({ items }: { items: [string, React.ReactNode, boolean?][] }) => (
  <Tiles>
    {items.map(([t, pic, small]) => <Tile key={t} $small={small}>{pic}<span>{t}</span></Tile>)}
  </Tiles>
);

const InstantAction = () => (
  <Column>
    <Dock>
      <Frame>
        <Scroller>
          <Section><Round /><SectionGlyph><Glyph d="M2 6.500h6M6.500 2.500v7" /></SectionGlyph><SectionLabel>Рабочее пространство</SectionLabel></Section>
          <Section><Round open /><SectionGlyph><Glyph cut d="M.5.500l7.500 7.500M8.500 3v5.500H3" /></SectionGlyph><SectionLabel>Импорт</SectionLabel></Section>
          <TileGrid items={IMPORT} />
          <Section><Round open /><SectionGlyph><Glyph d="M3 3l6 6M9 3l-6 6" /></SectionGlyph><SectionLabel>Очистка</SectionLabel></Section>
          <TileGrid items={CLEAN} />
          <Section />
        </Scroller>
        <Track><Thumb /></Track>
      </Frame>
    </Dock>
    <DockTab>
      Мгновенное действие
      <Icon size={10} box={10}><path d="M1 1h8v8H1z" fill="none" stroke="#eee" strokeWidth="1.400" /></Icon>
      <Icon size={10} box={10}><path d="M1 1l8 8M9 1l-8 8" stroke="#eee" strokeWidth="2.200" /></Icon>
    </DockTab>
  </Column>
);

const LaneControls = ({ n }: { n: number }) => (
  <LaneHead>
    <DbScale><span>-6,0</span><span>-?</span><span>-6,0</span></DbScale>
    <LaneButtons><Chip>{n}</Chip><FoldButton aria-label="Свернуть" /></LaneButtons>
  </LaneHead>
);

const FileTab = styled(DockTab)`margin-left: 5px; font: bold 12px/17px ${CONDENSED};`;

const Editor = () => (
  <Column>
    <DataWindow>
      <Overview><OverviewWaves /></Overview>
      <RulerRow>
        <RulerHead><LockIcon /><EditToolIcon beam="#eee" /></RulerHead>
        <Ruler>
          <RegionTrack><RegionBar /></RegionTrack>
          <Times />
        </Ruler>
      </RulerRow>
      <Lanes>
        <LaneHeads><LaneControls n={1} /><LaneControls n={2} /></LaneHeads>
        <WaveBox><Waves /></WaveBox>
      </Lanes>
      <ScrollRow>
        <ScrollButton aria-label="Крупнее"><Shape d={P.plus} size={12} /></ScrollButton>
        <ScrollButton aria-label="Мельче"><Shape d={P.minus} size={12} /></ScrollButton>
        <ScrollButton $line aria-label="Влево"><Shape d={P.left} size={13} /></ScrollButton>
        <ScrollTrack />
        <ScrollButton $line aria-label="Вправо"><Shape d={P.right} size={13} /></ScrollButton>
        <ScrollButton $line aria-label="Крупнее"><Shape d={P.plus} size={12} /></ScrollButton>
        <ScrollButton $apart aria-label="Мельче"><Shape d={P.minus} size={12} /></ScrollButton>
        <ScrollButton aria-label="Весь файл"><Shape d={P.both} size={11} /></ScrollButton>
      </ScrollRow>
      <PlayRow>
        <PlayButton><RecPauseIcon /></PlayButton>
        <PlayButton><RecIcon /></PlayButton>
        <PlayButton><Shape d={P.start} /></PlayButton>
        <PlayButton><Shape d={P.end} /></PlayButton>
        <PlayButton><Shape d={P.stop} /></PlayButton>
        <PlayButton><Shape d={P.play} /></PlayButton>
        <PlayButton><PencilIcon /></PlayButton>
        <Fields>
          <Field readOnly aria-label="Конец" defaultValue="00:00:24,613" />
          <Field readOnly aria-label="Длина" defaultValue="00:00:23,405" />
          <Field readOnly aria-label="Масштаб" defaultValue="1:4 096" />
        </Fields>
      </PlayRow>
    </DataWindow>
    <FileTab>Binary_Finary_-_1998_(James_Dymond_Radio_Edit).mp3</FileTab>
  </Column>
);

const ChannelMeters = () => (
  <Column>
    <MeterPanel>
      <MeterHeads><Chip>1</Chip><Chip>2</Chip></MeterHeads>
      <MeterBox><Meter /></MeterBox>
    </MeterPanel>
    <DockTab $wide>Индикатор каналов</DockTab>
  </Column>
);

export default function App() {
  return (
    <>
      <Global />
      <Window>
        <TitleBar>
          <Icon size={18} box={18}>
            <path d="M9 1l8 4v8l-8 4-8-4V5z" fill="#231416" />
            <path d="M12.500 5.500H7l-1.500 2L12 10l-1.500 2.500H5.500" fill="none" stroke="#e0444c" strokeWidth="1.800" />
          </Icon>
          <Title>- [Binary_Finary_-_1998_(James_Dymond_Radio_Edit).mp3]</Title>
          <CaptionButton aria-label="Свернуть"><Icon size={12} box={12}><path d="M1 6.500h10" stroke="#000" /></Icon></CaptionButton>
          <CaptionButton aria-label="Развернуть"><Icon size={12} box={12}><path d="M1.500 1.500h9v9h-9z" fill="none" stroke="#000" /></Icon></CaptionButton>
          <CaptionButton aria-label="Закрыть"><Icon size={12} box={12}><path d="M1 1l10 10M11 1L1 11" stroke="#000" strokeWidth="1.200" /></Icon></CaptionButton>
        </TitleBar>
        <MenuBar>
          <DocIcon>
            <Icon>
              <path d="M1 0h10l4 4v12H1z" fill="#2a1416" />
              <path d="M11 0l4 4h-4z" fill="#e0444c" />
              <text x="2" y="11" fontSize="8" fontFamily={ARIAL} fill="#e0444c">frg</text>
            </Icon>
          </DocIcon>
          {MENUS.map((m) => (
            <MenuTop key={m} $open={m === "Инструменты"}>
              <button aria-haspopup="menu">{m}</button>
              {m === "Инструменты" && (
                <>
                  <ToolsMenu />
                  <Pointer>
                    <svg width="12" height="19" viewBox="0 0 12 19"><path d="M.5.700v15.500l3.700-3.400 2.400 5.500 2.400-1-2.400-5.400h4.900z" fill="#fff" stroke="#000" /></svg>
                  </Pointer>
                </>
              )}
            </MenuTop>
          ))}
          <MdiGroup>
            <MdiButton aria-label="Свернуть"><Icon size={12} box={12}><path d="M3 8h6v2H3z" fill="#7c8a96" /></Icon></MdiButton>
            <MdiButton aria-label="Восстановить"><Icon size={12} box={12}><path d="M4 4.500V2h6v5H8M2.500 5.500h5v4h-5z" fill="none" stroke="#7c8a96" strokeWidth="1.500" /></Icon></MdiButton>
            <MdiButton aria-label="Закрыть"><Icon size={12} box={12}><path d="M3 3l6 6M9 3l-6 6" stroke="#7c8a96" strokeWidth="2.200" /></Icon></MdiButton>
          </MdiGroup>
        </MenuBar>
        <ToolArea>
          <ToolRow><Grip /><Tools items={TOOLS1} on={18} /></ToolRow>
          <ToolRow $short><Grip /><Tools items={TOOLS2} /></ToolRow>
        </ToolArea>
        <Body>
          <InstantAction />
          <Editor />
          <ChannelMeters />
        </Body>
        <Status>
          <StatusCell $w={64}>44 100 Hz</StatusCell>
          <StatusCell $w={48}>16 бит</StatusCell>
          <StatusCell $w={52}>Стерео</StatusCell>
          <StatusCell $w={80}>00:03:00,924</StatusCell>
          <StatusCell $w={79} $gap>69 186,0 Мб</StatusCell>
        </Status>
      </Window>
    </>
  );
}
